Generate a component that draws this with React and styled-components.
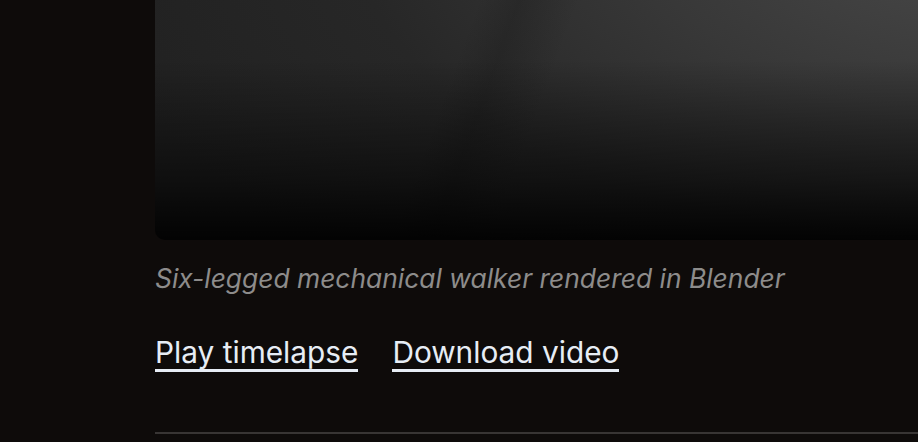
import React from "react";
import styled, { createGlobalStyle } from "styled-components";

const GlobalStyle = createGlobalStyle`
    html, body {
        margin: 0;
        padding: 0;
        background: #0e0b0a;
        overflow: hidden;
    }
    body {
        font-family: Inter, "Noto Sans", "Liberation Sans", sans-serif;
    }
`;

const App = () => {
    return (
        <Page>
            <GlobalStyle />
            <Column>
                <Figure>
                    <Render />
                    <Caption>Six-legged mechanical walker rendered in Blender</Caption>
                </Figure>
                <Links>
                    <LinkItem href="#">Play timelapse</LinkItem>
                    <LinkItem href="#">Download video</LinkItem>
                </Links>
                <Divider />
            </Column>
        </Page>
    );
};

export default App;

const Page = styled.div`
    height: 442px;
    overflow: hidden;
    padding-left: 155px;
`;

const Column = styled.div`
    width: 860px;
    margin-top: -160px;
`;

const Figure = styled.figure`
    margin: 0;
    display: flex;
    flex-direction: column;
`;

const Render = styled.div`
    height: 400px;
    border-radius: 10px;
    background:
        linear-gradient(to bottom, rgba(0, 0, 0, 0) 55%, rgba(0, 0, 0, 0.55) 85%, rgba(0, 0, 0, 0.92) 100%),
        linear-gradient(110deg, rgba(0, 0, 0, 0) 38%, rgba(20, 20, 20, 0.25) 42%, rgba(0, 0, 0, 0) 48%),
        radial-gradient(ellipse 110% 120% at 100% 20%, #4c4c4c 0%, #383838 40%, #272727 70%, #212121 100%);
`;

const Caption = styled.figcaption`
    margin-top: 21px;
    font-size: 26.4px;
    line-height: 34px;
    font-style: italic;
    color: #8d8c8b;
`;

const Links = styled.div`
    display: flex;
    gap: 34px;
    margin-top: 40px;
`;

const LinkItem = styled.a`
    font-size: 29.8px;
    line-height: 34px;
    color: #e7edf5;
    text-decoration: none;
    border-bottom: 3px solid #e7edf5;
`;

const Divider = styled.hr`
    margin: 60px 0 0;
    border: none;
    height: 2px;
    background: #383534;
`;
